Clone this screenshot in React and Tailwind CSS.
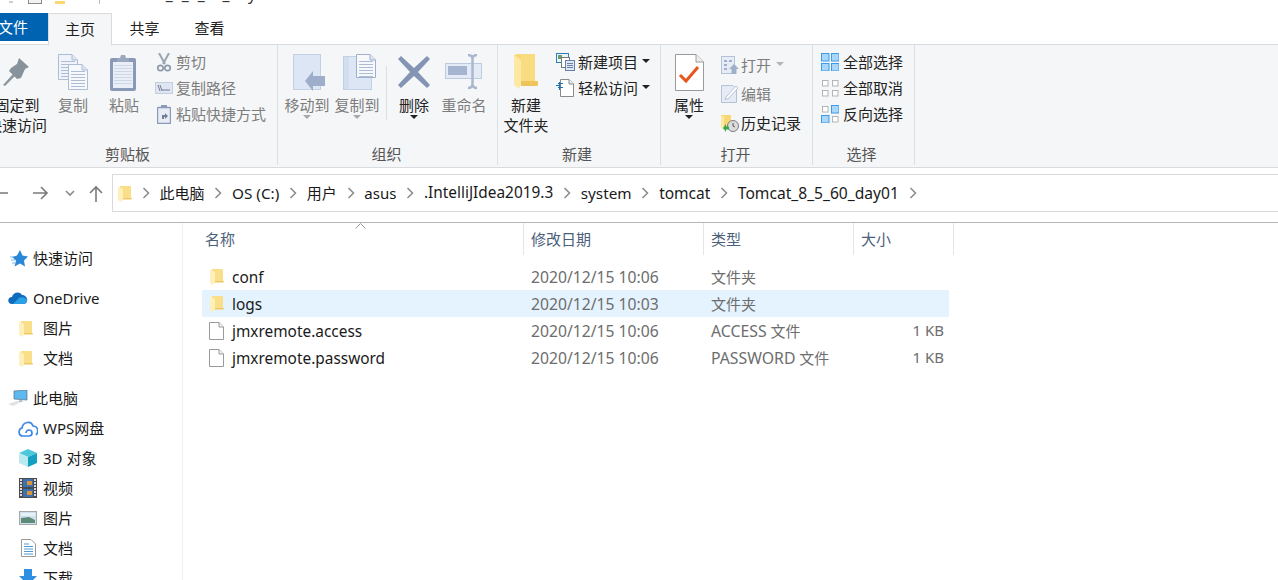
import React from 'react';

const CN = '"Noto Sans", "Noto Sans CJK SC", sans-serif';

const Folder = ({ className = 'w-[14px] h-[17px]' }) => (
  <svg viewBox="0 0 14 17" className={className}>
    <path d="M2 1 H12 Q13 1 13 2 V14 H2 Z" fill="#fadf8a" />
    <path d="M0 1.5 L5 4 V14.5 L3 17 L0 15 Z" fill="#fff0bb" />
    <path d="M5 13 H14 L13.5 14.5 H5 Z" fill="#efc861" />
  </svg>
);

const BigFolder = () => (
  <svg viewBox="0 0 24 36" className="w-6 h-9">
    <path d="M0 1 L4 0 H21 V30 H0 Z" fill="#f8d775" />
    <path d="M7 0 H21 V28 H7 Z" fill="#f9db80" />
    <path d="M0 1 L7 6 V30 L5 35 L0 31 Z" fill="#fde9a3" />
    <path d="M7 27 H24 V31 L23 32 H7 Z" fill="#eec45c" />
  </svg>
);

const FileIcon = () => (
  <svg viewBox="0 0 15 18" className="w-[15px] h-[18px]">
    <path d="M1 .5 H10 L14.5 5 V17.5 H.5 V.5 Z" fill="#fff" stroke="#9a9a9a" />
    <path d="M10 .5 V5 H14.5" fill="#f0f0f0" stroke="#9a9a9a" />
  </svg>
);

const Page = ({ x, y, w = 19, h = 26, fill = '#f0f4fa', stroke = '#aebdd6', lines = '#aebdd6' }) => (
  <g transform={`translate(${x} ${y})`}>
    <path d={`M.5 .5 H${w - 6} L${w - .5} 6 V${h - .5} H.5 Z`} fill={fill} stroke={stroke} />
    <path d={`M${w - 6} .5 V6 H${w - .5}`} fill="#dfe6f2" stroke={stroke} />
    {[7, 10, 13, 16, 19, 22].map(l => (
      <path key={l} d={`M3 ${l + .5} H${w - 3}`} stroke={lines} />
    ))}
  </g>
);

const PinIcon = () => (
  <svg viewBox="0 0 28 28" className="w-7 h-7">
    <path d="M0 27 L10 16 L12 18 L2 28 Z" fill="#8d979f" />
    <path d="M16 0 L26 9 L22 11 L18 20 L14 21 L6 13 L8 10 L14 6 Z" fill="#87929b" />
  </svg>
);

const CopyIcon = () => (
  <svg viewBox="0 0 31 37" className="w-[31px] h-[37px]">
    <Page x={0} y={0} w={20} h={26} />
    <Page x={10} y={10} w={20} h={26} fill="#f6f8fc" />
  </svg>
);

const PasteIcon = () => (
  <svg viewBox="0 0 28 37" className="w-7 h-[37px]">
    <rect x="0" y="4" width="26" height="33" rx="2" fill="#8a99b7" />
    <rect x="3" y="8" width="20" height="26" fill="#e9eef7" />
    {[11, 14, 17, 20, 23, 26, 29].map(l => <path key={l} d={`M4 ${l + .5} H22`} stroke="#cdd7e8" />)}
    <path d="M10 4 L11 1 H15 L16 4 H19 V8 H7 V4 Z" fill="#9aa7bf" />
  </svg>
);

const MoveIcon = () => (
  <svg viewBox="0 0 33 37" className="w-[33px] h-[37px] ml-[5px]">
    <rect x=".5" y=".5" width="27" height="35" fill="#dde6f4" stroke="#c3d1e6" />
    <path d="M12 27 L20 17 V22 H32 V32 H20 V37 Z" fill="#9eadc9" />
  </svg>
);

const CopyToIcon = () => (
  <svg viewBox="0 0 34 37" className="w-[34px] h-[37px] ml-[6px]">
    <rect x=".5" y="2.5" width="28" height="33" fill="#dde6f4" stroke="#c3d1e6" />
    <rect x="1" y="3" width="5" height="32" fill="#d2ddef" />
    <Page x={13} y={0} w={20} h={24} fill="#f6f8fc" stroke="#9fb0cc" />
  </svg>
);

const DeleteIcon = () => (
  <svg viewBox="0 0 32 32" className="w-8 h-8">
    <path d="M3 0 L16 12 L29 0 L32 3 L20 16 L32 29 L29 32 L16 20 L3 32 L0 29 L12 16 L0 3 Z" fill="#8494b4" />
  </svg>
);

const RenameIcon = () => (
  <svg viewBox="0 0 38 36" className="w-[38px] h-9">
    <rect x=".5" y="9.5" width="36" height="15" fill="#e4ebf6" stroke="#bccbe0" />
    <rect x="3" y="12" width="19" height="9" fill="#a6b5cf" />
    <path d="M23 1 C26 1 27 2 27.5 4 C28 2 29 1 32 1 M27.5 4 V31 M23 34 C26 34 27 33 27.5 31 C28 33 29 34 32 34" fill="none" stroke="#a9b8cf" strokeWidth="2.5" />
  </svg>
);

const PropsIcon = () => (
  <svg viewBox="0 0 29 37" className="w-[29px] h-[37px]">
    <path d="M.5 .5 H21 L28.5 8 V36.5 H.5 Z" fill="#fff" stroke="#9a9a9a" />
    <path d="M21 .5 V8 H28.5" fill="#eee" stroke="#9a9a9a" />
    <path d="M5 21 L11 27 L23 13" fill="none" stroke="#e8551e" strokeWidth="3" />
  </svg>
);

const ScissorIcon = () => (
  <svg viewBox="0 0 14 19" className="w-[14px] h-[19px]">
    <path d="M2 0 L8 11 M12 0 L6 11" stroke="#9aa5b4" strokeWidth="2" />
    <circle cx="3.5" cy="15" r="2.7" fill="none" stroke="#8d99aa" strokeWidth="1.7" />
    <circle cx="10.5" cy="15" r="2.7" fill="none" stroke="#8d99aa" strokeWidth="1.7" />
  </svg>
);

const PathIcon = () => (
  <svg viewBox="0 0 18 12" className="w-[18px] h-3">
    <rect x=".5" y=".5" width="17" height="11" fill="#dfe6f2" stroke="#c4cfe2" />
    <path d="M3 3 L5 9 M5 3 L7 9 M8 7 V9 M10 7 V9 M12 7 V9 M14 7 V9" stroke="#6f7f9a" />
  </svg>
);

const ShortcutIcon = () => (
  <svg viewBox="0 0 14 19" className="w-[14px] h-[19px]">
    <rect x=".5" y="2.5" width="13" height="16" rx="1" fill="#e8edf5" stroke="#8a99b7" strokeWidth="1.4" />
    <rect x="4" y="0" width="6" height="3" fill="#8a99b7" />
    <path d="M5 14 V10 H8 V8 L11 11 L8 14 V12 H7 V14 Z" fill="#6f7f9a" />
  </svg>
);

const NewItemIcon = () => (
  <svg viewBox="0 0 19 18" className="w-[19px] h-[18px]">
    <rect x=".5" y=".5" width="12" height="9" fill="#eaf2fa" stroke="#2f7fbd" />
    <rect x="2" y="2" width="4" height="4" fill="#6b9a6b" />
    <rect x="5.5" y="4.5" width="8" height="10" fill="#fff" stroke="#777" />
    <rect x="9.5" y="7.5" width="9" height="10" fill="#dfe8f5" stroke="#6a7fa5" />
    <path d="M11 10.5 H17 M11 12.5 H17 M11 14.5 H17" stroke="#6a7fa5" />
  </svg>
);

const EasyIcon = () => (
  <svg viewBox="0 0 18 18" className="w-[18px] h-[18px]">
    <path d="M4.5 .5 H13 L17.5 5 V17.5 H4.5 Z" fill="#fff" stroke="#8a8a8a" />
    <path d="M13 .5 V5 H17.5" fill="#eee" stroke="#8a8a8a" />
    <path d="M2 4.5 H7 M0 6.5 H5 M2 8.5 H7" stroke="#1f6fb5" />
    <path d="M3.5 3 V11" stroke="#1f6fb5" />
  </svg>
);

const OpenIcon = () => (
  <svg viewBox="0 0 18 18" className="w-[18px] h-[18px]">
    <rect x=".5" y=".5" width="13" height="17" fill="#e6ecf5" stroke="#b5c2d6" />
    <path d="M3 4 H6 V6 H3 Z M8 4 H11 V6 H8 Z M3 8 H6 V10 H3 Z M3 12 H6 V14 H3 Z" fill="#9fb0c9" />
    <path d="M13 8 L18 13 H15.5 V18 H10.5 V13 H8 Z" fill="#9fb0c9" />
  </svg>
);

const EditIcon = () => (
  <svg viewBox="0 0 18 18" className="w-[18px] h-[18px]">
    <path d="M.5 .5 H12 L15.5 4 V17.5 H.5 Z" fill="#e6ecf5" stroke="#b5c2d6" />
    <path d="M5 14 L4 15 L5 12 L15 1 L17 3 L7 14 Z" fill="#fff" stroke="#b5c2d6" />
  </svg>
);

const HistoryIcon = () => (
  <svg viewBox="0 0 18 18" className="w-[18px] h-[18px]">
    <path d="M0 1 H10 V15 H2 L0 13 Z" fill="#f8d775" />
    <path d="M0 1 L3 3 V16 L0 13 Z" fill="#fde9a3" />
    <circle cx="12" cy="12" r="5.5" fill="#dcdcdc" stroke="#7d7d7d" />
    <path d="M12 9 V12 L14 13" stroke="#555" fill="none" />
    <path d="M2 14 L5 10 V12.5 H8 V15.5 H5 V18 Z" fill="#34a853" />
  </svg>
);

const GridIcon = ({ cells }) => (
  <svg viewBox="0 0 18 18" className="w-[18px] h-[18px]">
    {cells.map((on, i) => {
      const x = i % 2 ? 10 : 0;
      const y = i > 1 ? 10 : 0;
      return on
        ? <rect key={i} x={x + .5} y={y + .5} width="7.5" height="7.5" fill="#a9d6fb" stroke="#3f9be6" />
        : <rect key={i} x={x + 1.5} y={y + 1.5} width="5.5" height="5.5" fill="#fff" stroke="#b4b4b4" />;
    })}
  </svg>
);

const Caret = ({ color = 'border-t-[#222]' }) => (
  <span className={`w-0 h-0 border-x-[4px] border-x-transparent border-t-[4px] ${color}`} />
);

const BigButton = ({ icon, lines, disabled, caret, className = 'w-[50px]' }) => (
  <div className={`flex flex-col items-center shrink-0 pt-[9px] ${className}`}>
    <div className="h-9 flex items-center justify-center">{icon}</div>
    <div className={`mt-[5px] text-center leading-[20px] whitespace-nowrap ${disabled ? 'text-[#7d7d7d]' : 'text-[#222]'}`}>
      {lines.map(l => <div key={l}>{l}</div>)}
    </div>
    {caret && <Caret color={disabled ? 'border-t-[#a8a8a8]' : 'border-t-[#222]'} />}
  </div>
);

const SmallButton = ({ icon, label, disabled, caret, gap = 'gap-[3px]', height = 'h-[26px]', caretGap = 'ml-[1px]' }) => (
  <div className={`flex items-center ${height} ${gap} whitespace-nowrap ${disabled ? 'text-[#7d7d7d]' : 'text-[#222]'}`}>
    <div className="w-[20px] flex justify-center shrink-0">{icon}</div>
    <span>{label}</span>
    {caret && <span className={`${caretGap} mb-[2px] flex`}><Caret color={disabled ? 'border-t-[#b5b5b5]' : 'border-t-[#222]'} /></span>}
  </div>
);

const Group = ({ label, className, labelClass = '', children }) => (
  <div className={`flex flex-col shrink-0 border-r border-[#dcdfe3] mb-[2px] ${className}`}>
    <div className="flex flex-1">{children}</div>
    <div className={`h-[24px] leading-[26px] text-center text-[#555] ${labelClass}`}>{label}</div>
  </div>
);

const Ribbon = () => (
  <div className="flex h-[123px] bg-[#f5f6f7] border-b border-[#dadbdc] overflow-hidden">
    <Group label="剪贴板" className="w-[278px]" labelClass="pr-[22px]">
      <BigButton icon={<PinIcon />} lines={['固定到', '快速访问']} className="w-[60px] -ml-[13px]" />
      <BigButton icon={<CopyIcon />} lines={['复制']} disabled className="w-[52px]" />
      <BigButton icon={<PasteIcon />} lines={['粘贴']} disabled />
      <div className="pt-[4px] pl-[5px] flex flex-col">
        <SmallButton icon={<ScissorIcon />} label="剪切" disabled gap="gap-[2px]" />
        <SmallButton icon={<PathIcon />} label="复制路径" disabled gap="gap-[2px]" />
        <SmallButton icon={<ShortcutIcon />} label="粘贴快捷方式" disabled gap="gap-[2px]" />
      </div>
    </Group>
    <Group label="组织" className="w-[220px]" labelClass="pr-[2px]">
      <BigButton icon={<MoveIcon />} lines={['移动到']} disabled caret className="w-[50px] ml-[4px]" />
      <BigButton icon={<CopyToIcon />} lines={['复制到']} disabled caret />
      <div className="w-px h-[54px] bg-[#dcdfe3] mt-[21px] ml-[4px] mr-[2px]" />
      <BigButton icon={<DeleteIcon />} lines={['删除']} caret />
      <BigButton icon={<RenameIcon />} lines={['重命名']} disabled />
    </Group>
    <Group label="新建" className="w-[163px]" labelClass="pr-[4px]">
      <BigButton icon={<BigFolder />} lines={['新建', '文件夹']} className="w-[50px] ml-[3px]" />
      <div className="pt-[4px] pl-[4px] flex flex-col">
        <SmallButton icon={<NewItemIcon />} label="新建项目" caret />
        <SmallButton icon={<EasyIcon />} label="轻松访问" caret />
      </div>
    </Group>
    <Group label="打开" className="w-[152px]" labelClass="pr-[2px]">
      <BigButton icon={<PropsIcon />} lines={['属性']} caret className="w-[50px] ml-[3px]" />
      <div className="pt-[5px] pl-[6px] flex flex-col">
        <SmallButton icon={<OpenIcon />} label="打开" disabled caret gap="gap-[1px]" height="h-[29px]" caretGap="ml-[4px]" />
        <SmallButton icon={<EditIcon />} label="编辑" disabled gap="gap-[1px]" height="h-[29px]" />
        <SmallButton icon={<HistoryIcon />} label="历史记录" gap="gap-[1px]" height="h-[29px]" />
      </div>
    </Group>
    <Group label="选择" className="w-[102px]" labelClass="pr-[4px]">
      <div className="pt-[4px] pl-[7px] flex flex-col">
        <SmallButton icon={<GridIcon cells={[1, 1, 1, 1]} />} label="全部选择" />
        <SmallButton icon={<GridIcon cells={[0, 0, 0, 0]} />} label="全部取消" />
        <SmallButton icon={<GridIcon cells={[0, 1, 1, 0]} />} label="反向选择" />
      </div>
    </Group>
  </div>
);

const Tabs = () => (
  <div className="flex h-[32px] border-b border-[#dadbdc] bg-white">
    <div className="w-[48px] h-[28px] bg-[#0063b1] text-white flex items-center justify-end pr-[20px] overflow-hidden whitespace-nowrap">文件</div>
    <div className="w-[64px] h-[32px] pb-[2px] bg-[#f5f6f7] border border-b-0 border-[#dadbdc] flex items-center justify-center text-[#222]">主页</div>
    <div className="w-[65px] h-[30px] flex items-center justify-center text-[#222]">共享</div>
    <div className="w-[65px] h-[30px] flex items-center justify-center text-[#222]">查看</div>
  </div>
);

const Chevron = () => (
  <svg viewBox="0 0 8 12" className="w-2 h-3 mx-[9.75px] shrink-0">
    <path d="M1.5 1 L6.5 6 L1.5 11" fill="none" stroke="#8a8a8a" strokeWidth="1.5" />
  </svg>
);

const crumbs = [
  { label: '此电脑', size: 'text-[15px]' },
  { label: 'OS (C:)', size: 'text-[15.3px]' },
  { label: '用户', size: 'text-[15px]' },
  { label: 'asus', size: 'text-[15px]' },
  { label: '.IntelliJIdea2019.3', size: 'text-[15.4px]' },
  { label: 'system', size: 'text-[15.3px]' },
  { label: 'tomcat', size: 'text-[15.5px]' },
  { label: 'Tomcat_8_5_60_day01', size: 'text-[15.6px]' },
];

const AddressRow = () => (
  <div className="flex h-[55px] pt-[6px] border-b border-[#b5b5b5]">
    <div className="w-[112px] h-[38px] flex items-center shrink-0">
      <svg viewBox="0 0 104 18" className="w-[104px] h-[18px]">
        <path d="M-4 9 H8 M33 9 H47 M41 3 L47 9 L41 15" fill="none" stroke="#7a7a7a" strokeWidth="1.6" />
        <path d="M66 7 L70 11 L74 7" fill="none" stroke="#8a8a8a" strokeWidth="1.6" />
        <path d="M96 18 V3 M90 9 L96 3 L102 9" fill="none" stroke="#7a7a7a" strokeWidth="1.6" />
      </svg>
    </div>
    <div className="flex-1 h-[38px] border border-r-0 border-[#d9d9d9] flex items-center pl-[5px] text-[#1a1a1a] whitespace-nowrap">
      <Folder />
      <Chevron />
      {crumbs.map(c => (
        <React.Fragment key={c.label}>
          <span className={c.size}>{c.label}</span>
          <Chevron />
        </React.Fragment>
      ))}
    </div>
  </div>
);

const Cloud = ({ c1 = '#0f6cbd', c2 = '#2aa0e6' }) => (
  <svg viewBox="0 0 20 14" className="w-5 h-[14px]">
    <path d="M4 13 C-1 13 -1 6 4 6 C5 1 12 0 14 4 C18 4 20 8 19 10 C19 12 17 13 15 13 Z" fill={c1} />
    <path d="M5 13 L11 7 C14 5 20 8 19 10 C19 12 17 13 15 13 Z" fill={c2} />
  </svg>
);

const PcIcon = () => (
  <svg viewBox="0 0 20 17" className="w-5 h-[17px]">
    <path d="M6 1 L19 0 V10 L6 9 Z" fill="#5cb8ee" stroke="#5a6e80" strokeWidth=".7" />
    <path d="M0 14 L9 11 L13 12 L5 16 Z" fill="#dfe3e6" />
    <path d="M11 10 L14 10 L15 12 L11 12 Z" fill="#b9c0c6" />
  </svg>
);

const WpsIcon = () => (
  <svg viewBox="0 0 20 17" className="w-5 h-[17px]">
    <path d="M5 16 C0 16 0 9 4 8 C5 2 13 0 15 6 C20 6 21 12 18 15 M5 16 H11 C15 16 15 10 11 10 C9 10 8 12 8 13" fill="none" stroke="#3d88ea" strokeWidth="1.7" />
  </svg>
);

const CubeIcon = () => (
  <svg viewBox="0 0 18 18" className="w-[18px] h-[18px]">
    <path d="M9 0 L18 4 L9 8 L0 4 Z" fill="#4cc8dc" />
    <path d="M0 4 L9 8 V18 L0 14 Z" fill="#b8eaf0" />
    <path d="M18 4 L9 8 V18 L18 14 Z" fill="#14a0c0" />
  </svg>
);

const VideoIcon = () => (
  <svg viewBox="0 0 18 20" className="w-[18px] h-5">
    <rect width="18" height="20" fill="#4a4a4a" />
    {[1, 4, 7, 10, 13, 16].map(y => (
      <g key={y}>
        <rect x="1" y={y} width="2" height="2" fill="#ddd" />
        <rect x="15" y={y} width="2" height="2" fill="#ddd" />
      </g>
    ))}
    <rect x="4" y="1" width="10" height="8" fill="#3d6fb5" />
    <rect x="4" y="11" width="10" height="8" fill="#3d6fb5" />
    <rect x="8" y="3" width="5" height="4" fill="#d8953a" />
    <rect x="8" y="13" width="5" height="4" fill="#d8953a" />
  </svg>
);

const PhotoIcon = () => (
  <svg viewBox="0 0 18 14" className="w-[18px] h-[14px]">
    <rect x=".5" y=".5" width="17" height="13" fill="#cfe0ee" stroke="#a8a8a8" />
    <path d="M2 7 L10 6 L16 9 V12 H2 Z" fill="#5e8a78" />
    <rect x="2" y="2" width="14" height="3" fill="#e6f0f7" />
  </svg>
);

const DocIcon = () => (
  <svg viewBox="0 0 15 18" className="w-[15px] h-[18px]">
    <path d="M.5 .5 H10 L14.5 5 V17.5 H.5 Z" fill="#fff" stroke="#9a9a9a" />
    <path d="M3 5 H8 M3 7.5 H12 M3 10 H12 M3 12.5 H12 M3 15 H12" stroke="#4d9ad6" />
  </svg>
);

const DownloadIcon = () => (
  <svg viewBox="0 0 18 18" className="w-[18px] h-[18px]">
    <path d="M5 0 H13 V7 H18 L9 16 L0 7 H5 Z" fill="#2f8fe0" />
  </svg>
);

const NavRow = ({ icon, label, indent = 'pl-[8px]', iconBox = 'w-[22px]', gap = 'gap-[3px]' }) => (
  <div className={`flex items-center h-[30px] ${indent} ${gap} text-[#1a1a1a] whitespace-nowrap`}>
    <div className={`${iconBox} flex justify-center shrink-0`}>{icon}</div>
    <span>{label}</span>
  </div>
);

const Sidebar = () => (
  <div className="w-[183px] shrink-0 border-r border-[#f0f0f0] pt-[20px]">
    <NavRow icon={<svg viewBox="0 0 18 17" className="w-[18px] h-[17px]"><path d="M10 0 L12.5 5.5 L18 6.5 L14 10.5 L15 16.5 L10 13.5 L4.5 16.5 L6 10.5 L2 7 L7 5.5 Z" fill="#2b88d8" /><path d="M0 7 H4 M1 10 H5 M2 13 H5" stroke="#7fb8e8" /></svg>} label="快速访问" />
    <div className="h-[10px]" />
    <NavRow icon={<Cloud />} label="OneDrive" indent="pl-[7px]" gap="gap-[4px]" />
    <NavRow icon={<Folder />} label="图片" indent="pl-[16px]" iconBox="w-[20px]" gap="gap-[7px]" />
    <NavRow icon={<Folder />} label="文档" indent="pl-[16px]" iconBox="w-[20px]" gap="gap-[7px]" />
    <div className="h-[10px]" />
    <NavRow icon={<PcIcon />} label="此电脑" indent="pl-[8px]" iconBox="w-[20px]" gap="gap-[5px]" />
    {[
      [<WpsIcon />, 'WPS网盘'],
      [<CubeIcon />, '3D 对象'],
      [<VideoIcon />, '视频'],
      [<PhotoIcon />, '图片'],
      [<DocIcon />, '文档'],
      [<DownloadIcon />, '下载'],
    ].map(([icon, label]) => (
      <NavRow key={label} icon={icon} label={label} indent="pl-[18px]" iconBox="w-[20px]" gap="gap-[5px]" />
    ))}
  </div>
);

const files = [
  { name: 'conf', date: '2020/12/15 10:06', type: '文件夹', folder: true },
  { name: 'logs', date: '2020/12/15 10:03', type: '文件夹', folder: true, hover: true },
  { name: 'jmxremote.access', date: '2020/12/15 10:06', typeEn: 'ACCESS', type: ' 文件', size: '1 KB' },
  { name: 'jmxremote.password', date: '2020/12/15 10:06', typeEn: 'PASSWORD', type: ' 文件', size: '1 KB' },
];

const FileList = () => (
  <div className="flex-1 pl-[19px] relative">
    <svg viewBox="0 0 11 6" className="absolute left-[172px] top-0 w-[11px] h-[6px]">
      <path d="M.5 5.5 L5.5 .5 L10.5 5.5" fill="none" stroke="#9a9a9a" />
    </svg>
    <div className="grid grid-cols-[321px_180px_150px_100px] h-[32px] ml-px text-[#4c607a] w-fit">
      <div className="border-r border-[#e5e5e5] pl-[2px] flex items-center">名称</div>
      <div className="border-r border-[#e5e5e5] pl-[7px] flex items-center">修改日期</div>
      <div className="border-r border-[#e5e5e5] pl-[7px] flex items-center">类型</div>
      <div className="border-r border-[#e5e5e5] pl-[7px] flex items-center">大小</div>
    </div>
    <div className="mt-[8px] w-[747px]">
      {files.map(f => (
        <div key={f.name} className={`grid grid-cols-[321px_180px_150px_96px] h-[27px] items-center ${f.hover ? 'bg-[#e5f3ff]' : ''}`}>
          <div className="flex items-center pl-[7px] text-[#1a1a1a]">
            <div className="w-[15px] flex justify-center shrink-0">{f.folder ? <Folder /> : <FileIcon />}</div>
            <span className="ml-[8px] pt-[2px] text-[15.4px]">{f.name}</span>
          </div>
          <div className="pl-[8px] text-[15.7px] text-[#6d6d6d]">{f.date}</div>
          <div className="pl-[8px] text-[#6d6d6d] whitespace-pre">
            {f.typeEn && <span className="text-[15.8px]">{f.typeEn}</span>}
            {f.type}
          </div>
          <div className="pr-[5px] pb-[2px] text-right text-[#6d6d6d]">{f.size}</div>
        </div>
      ))}
    </div>
  </div>
);

export default function App() {
  return (
    <div className="w-[1278px] h-[580px] overflow-hidden bg-white text-[15px] leading-[20px]" style={{ fontFamily: CN }}>
      <div className="h-[13px]">
        <div className="h-[4px] overflow-hidden flex text-[#333]">
          <div className="flex items-end h-[4px] w-[112px] shrink-0">
            <span className="ml-[9px] w-[4px] h-[2px] mb-[1px] bg-[#d0d0d0]" />
            <span className="ml-[15px] w-[14px] h-[4px] border-x border-b border-[#8a8a8a] bg-[#f2f2f2]" />
            <span className="ml-[13px] w-[10px] h-[3px] bg-[#f8d775]" />
            <span className="ml-[34px] w-px h-[4px] bg-[#bbb]" />
          </div>
          <span className="-mt-[16px] text-[15.7px] whitespace-nowrap">Tomcat_8_5_60_day01</span>
        </div>
      </div>
      <Tabs />
      <Ribbon />
      <AddressRow />
      <div className="flex h-[358px] overflow-hidden">
        <Sidebar />
        <FileList />
      </div>
    </div>
  );
}
